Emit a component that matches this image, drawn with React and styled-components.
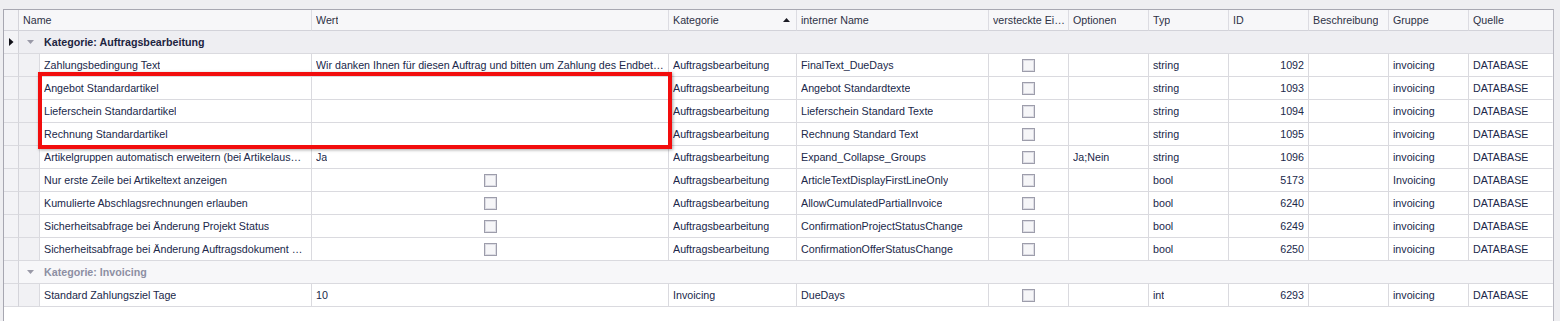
import styled, { createGlobalStyle } from "styled-components"

const GlobalStyle = createGlobalStyle`
  html, body {
    margin: 0;
    padding: 0;
    background: #eeeef1;
  }
  body {
    font-family: "Liberation Sans", Arial, sans-serif;
    font-size: 10.7px;
    color: #20284a;
  }
`

const COLS = "15px 21px 272px 357px 128px 192px 80px 80px 80px 80px 80px 80px 84px"

const Page = styled.div`
  width: 1560px;
  height: 321px;
  padding: 9px 0 0 3px;
  box-sizing: border-box;
  overflow: hidden;
`

const Panel = styled.div`
  position: relative;
  width: 1551px;
  height: 320px;
  box-sizing: border-box;
  background: #ffffff;
  border-left: 1px solid #a7a7b1;
  border-top: 1px solid #a7a7b1;
  border-right: 1px solid #b9b9c2;
`

const Row = styled.div`
  display: grid;
  grid-template-columns: ${COLS};
  height: ${p => (p.$header ? 21 : 23)}px;
`

const Cell = styled.div`
  box-sizing: border-box;
  border-right: 1px solid ${p => (p.$last ? "transparent" : "#dadadf")};
  border-bottom: 1px solid #dadadf;
  padding: 0 4px;
  display: flex;
  align-items: center;
  justify-content: ${p => (p.$align === "right" ? "flex-end" : p.$align === "center" ? "center" : "flex-start")};
  white-space: nowrap;
  overflow: hidden;
  min-width: 0;
  background: #ffffff;
`

const Text = styled.span`
  overflow: hidden;
  text-overflow: ellipsis;
  white-space: nowrap;
`

const HeadCell = styled(Cell)`
  background: #f7f7f9;
  color: #2e3246;
  border-bottom-color: #d2d2d9;
  border-right-color: ${p => (p.$last ? "transparent" : "#dcdce2")};
  grid-column: ${p => p.$span || "auto"};
  justify-content: space-between;
  padding-right: ${p => (p.$sorted ? 6 : 2)}px;
`

const Indicator = styled.div`
  box-sizing: border-box;
  background: #f3f3f6;
  border-right: 1px solid #d4d4da;
  border-bottom: 1px solid ${p => (p.$head ? "#d2d2d9" : "#dadadf")};
  display: flex;
  align-items: center;
  justify-content: center;
`

const Indent = styled.div`
  box-sizing: border-box;
  background: #f1f1f4;
  border-right: 1px solid #dadadf;
  border-bottom: 1px solid #dadadf;
`

const GroupCell = styled.div`
  grid-column: 2 / -1;
  box-sizing: border-box;
  background: ${p => (p.$dim ? "#f7f7f9" : "#eeeef2")};
  border-bottom: 1px solid #dadadf;
  display: flex;
  align-items: center;
  padding-left: 8px;
  font-weight: bold;
  color: ${p => (p.$dim ? "#8d8fa3" : "#1d2440")};
`

const GroupTitle = styled.span`
  margin-left: 10px;
`

const Check = styled.span`
  display: inline-block;
  width: 13px;
  height: 13px;
  box-sizing: border-box;
  border: 1px solid #9d9dab;
  background: #f6f6f8;
  box-shadow: inset 0 0 0 1px #dcdce3;
`

const Highlight = styled.div`
  position: absolute;
  left: 34px;
  top: 62px;
  width: 634px;
  height: 77px;
  box-sizing: border-box;
  border: 4px solid #f20d0d;
  box-shadow: 1px 1px 3px rgba(0, 0, 0, 0.35);
  pointer-events: none;
`

const Arrow = ({ dir, color }) =>
  dir === "right" ? (
    <svg width="5" height="8" viewBox="0 0 5 8">
      <path d="M0 0 L4.5 4 L0 8 Z" fill={color} />
    </svg>
  ) : dir === "up" ? (
    <svg width="7" height="4" viewBox="0 0 7 4">
      <path d="M0 4 L3.5 0 L7 4 Z" fill={color} />
    </svg>
  ) : (
    <svg width="7" height="4" viewBox="0 0 7 4">
      <path d="M0 0 L7 0 L3.5 4 Z" fill={color} />
    </svg>
  )

const headers = [
  "Kategorie",
  "interner Name",
  "versteckte Eigenschaft",
  "Optionen",
  "Typ",
  "ID",
  "Beschreibung",
  "Gruppe",
  "Quelle",
]

const CB = "__checkbox__"

const groups = [
  {
    title: "Kategorie: Auftragsbearbeitung",
    rows: [
      ["Zahlungsbedingung Text", "Wir danken Ihnen für diesen Auftrag und bitten um Zahlung des Endbetrages innerhalb von {0} Tagen.", "Auftragsbearbeitung", "FinalText_DueDays", "", "string", "1092", "invoicing"],
      ["Angebot Standardartikel", "", "Auftragsbearbeitung", "Angebot Standardtexte", "", "string", "1093", "invoicing"],
      ["Lieferschein Standardartikel", "", "Auftragsbearbeitung", "Lieferschein Standard Texte", "", "string", "1094", "invoicing"],
      ["Rechnung Standardartikel", "", "Auftragsbearbeitung", "Rechnung Standard Text", "", "string", "1095", "invoicing"],
      ["Artikelgruppen automatisch erweitern (bei Artikelauswahl)", "Ja", "Auftragsbearbeitung", "Expand_Collapse_Groups", "Ja;Nein", "string", "1096", "invoicing"],
      ["Nur erste Zeile bei Artikeltext anzeigen", CB, "Auftragsbearbeitung", "ArticleTextDisplayFirstLineOnly", "", "bool", "5173", "Invoicing"],
      ["Kumulierte Abschlagsrechnungen erlauben", CB, "Auftragsbearbeitung", "AllowCumulatedPartialInvoice", "", "bool", "6240", "invoicing"],
      ["Sicherheitsabfrage bei Änderung Projekt Status", CB, "Auftragsbearbeitung", "ConfirmationProjectStatusChange", "", "bool", "6249", "invoicing"],
      ["Sicherheitsabfrage bei Änderung Auftragsdokument Status", CB, "Auftragsbearbeitung", "ConfirmationOfferStatusChange", "", "bool", "6250", "invoicing"],
    ],
  },
  {
    title: "Kategorie: Invoicing",
    dim: true,
    rows: [
      ["Standard Zahlungsziel Tage", "10", "Invoicing", "DueDays", "", "int", "6293", "invoicing"],
    ],
  },
]

function DataRow({ row }) {
  const [name, value, cat, internal, options, type, id, group] = row
  return (
    <Row>
      <Indicator />
      <Indent />
      <Cell><Text>{name}</Text></Cell>
      {value === CB ? (
        <Cell $align="center"><Check /></Cell>
      ) : (
        <Cell><Text>{value}</Text></Cell>
      )}
      <Cell><Text>{cat}</Text></Cell>
      <Cell><Text>{internal}</Text></Cell>
      <Cell $align="center"><Check /></Cell>
      <Cell><Text>{options}</Text></Cell>
      <Cell><Text>{type}</Text></Cell>
      <Cell $align="right"><Text>{id}</Text></Cell>
      <Cell />
      <Cell><Text>{group}</Text></Cell>
      <Cell $last><Text>DATABASE</Text></Cell>
    </Row>
  )
}

export default function App() {
  return (
    <Page>
      <GlobalStyle />
      <Panel>
        <Row $header>
          <Indicator $head />
          <HeadCell $span="2 / 4"><Text>Name</Text></HeadCell>
          <HeadCell><Text>Wert</Text></HeadCell>
          {headers.map((h, i) => (
            <HeadCell key={h} $last={i === headers.length - 1} $sorted={h === "Kategorie"}>
              <Text>{h}</Text>
              {h === "Kategorie" && <Arrow dir="up" color="#1b1b24" />}
            </HeadCell>
          ))}
        </Row>
        {groups.map((g, gi) => (
          <div key={g.title}>
            <Row>
              <Indicator>{gi === 0 && <Arrow dir="right" color="#111118" />}</Indicator>
              <GroupCell $dim={g.dim}>
                <Arrow dir="down" color="#9a9aa8" />
                <GroupTitle>{g.title}</GroupTitle>
              </GroupCell>
            </Row>
            {g.rows.map(r => (
              <DataRow key={r[0]} row={r} />
            ))}
          </div>
        ))}
        <Highlight />
      </Panel>
    </Page>
  )
}
